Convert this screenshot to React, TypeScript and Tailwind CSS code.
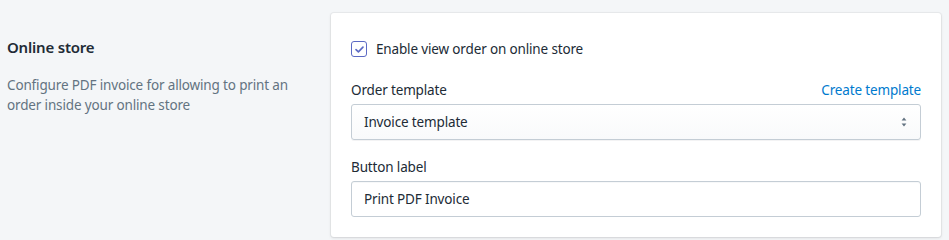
import { useState } from 'react';

export default function App() {
  const [enabled, setEnabled] = useState(true);
  const [template, setTemplate] = useState('Invoice template');
  const [label, setLabel] = useState('Print PDF Invoice');

  return (
    <div
      className="min-h-[240px] w-[949px] bg-[#f4f6f8] text-[#212b36] tracking-[-0.15px]"
      style={{ fontFamily: '"Noto Sans", "Open Sans", sans-serif' }}
    >
      <div className="flex gap-5 pl-[7px] pt-[13px]">
        {/* Left description column */}
        <div className="w-[304px] pt-[22px]">
          <h2 className="text-[15px] font-semibold leading-6 tracking-[-0.2px]">Online store</h2>
          <p className="mt-[16px] text-[13.5px] leading-5 text-[#637381]">
            Configure PDF invoice for allowing to print an order inside your online store
          </p>
        </div>

        {/* Settings card */}
        <div className="w-[610px] rounded-[3px] bg-white px-5 pb-5 pt-[26px] shadow-[0_0_0_1px_rgba(63,63,68,0.05),0_1px_3px_0_rgba(63,63,68,0.15)]">
          <label className="flex h-5 cursor-pointer items-center gap-[9px] text-[13.5px] leading-5">
            <input
              type="checkbox"
              className="sr-only"
              checked={enabled}
              onChange={(e) => setEnabled(e.target.checked)}
            />
            <span className="flex h-4 w-4 items-center justify-center rounded-[3px] border border-[#5c6ac4] bg-white">
              {enabled && (
                <svg viewBox="0 0 12 12" className="h-[11px] w-[11px]">
                  <path
                    d="M2.2 6.2 4.8 8.6 9.8 3.4"
                    fill="none"
                    stroke="#5c6ac4"
                    strokeWidth="1.8"
                    strokeLinecap="round"
                    strokeLinejoin="round"
                  />
                </svg>
              )}
            </span>
            Enable view order on online store
          </label>

          <div className="mt-[21px]">
            <div className="mb-1 flex items-center justify-between text-[13.5px] leading-5">
              <span>Order template</span>
              <a href="#" className="text-[#007ace]">
                Create template
              </a>
            </div>
            <div className="relative">
              <select
                value={template}
                onChange={(e) => setTemplate(e.target.value)}
                className="h-9 w-full appearance-none rounded-[3px] border border-[#c4cdd5] bg-gradient-to-b from-white to-[#f9fafb] pl-3 pr-8 text-[13.5px] tracking-[-0.15px] text-[#212b36] shadow-[0_1px_0_0_rgba(22,29,37,0.05)] outline-none"
              >
                <option>Invoice template</option>
                <option>Packing slip</option>
              </select>
              <svg
                viewBox="0 0 10 14"
                className="pointer-events-none absolute right-[13px] top-1/2 h-[12px] w-[8px] -translate-y-1/2"
              >
                <path d="M5 1.5 8 5.2H2z M5 12.5 2 8.8h6z" fill="#637381" />
              </svg>
            </div>
          </div>

          <div className="mt-[17px]">
            <div className="mb-1 text-[13.5px] leading-5">Button label</div>
            <input
              type="text"
              value={label}
              onChange={(e) => setLabel(e.target.value)}
              className="h-9 w-full rounded-[3px] border border-[#c4cdd5] bg-white px-3 text-[13.5px] tracking-[-0.15px] text-[#212b36] shadow-[inset_0_1px_0_0_rgba(99,115,129,0.05)] outline-none"
            />
          </div>
        </div>
      </div>
    </div>
  );
}
